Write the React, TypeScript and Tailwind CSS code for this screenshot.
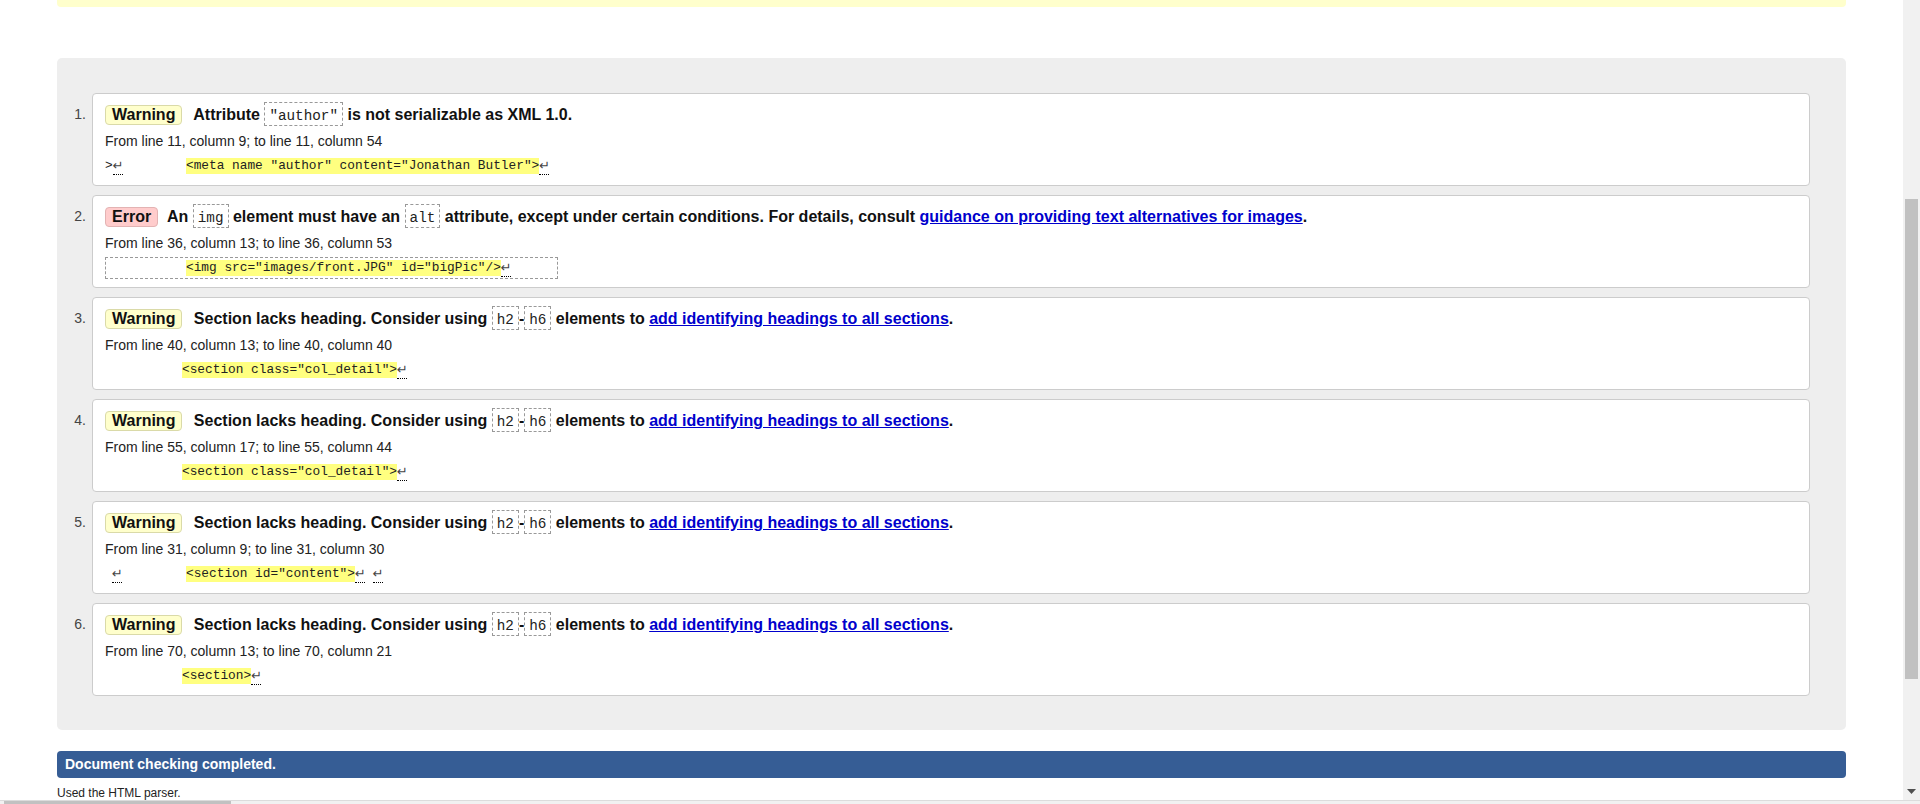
import type { ReactNode } from 'react';

const sans = "font-['Liberation_Sans',Arial,sans-serif]";
const mono = "font-['Liberation_Mono','DejaVu_Sans_Mono',monospace]";

function Lf() {
  return (
    <span className="inline-block align-top w-[10px] h-[17px] leading-[16px] text-center font-['DejaVu_Sans',sans-serif] text-[13px] text-[#444] border-b border-dotted border-[#000]">
      ↵
    </span>
  );
}

function Code({ children }: { children: ReactNode }) {
  return (
    <code className={`inline-block ${mono} font-normal text-[14.3px] leading-[16px] text-[#222] border border-dashed border-[#999] px-[4px] pt-[5px] pb-[1px]`}>
      {children}
    </code>
  );
}

function Badge({ kind }: { kind: 'Warning' | 'Error' }) {
  const tone =
    kind === 'Error'
      ? 'bg-[#ffcccc] border-[#e3b3b3] mr-[5px]'
      : 'bg-[#ffffcc] border-[#dadaa8] mr-[7px]';
  return (
    <span className={`inline-block leading-[18px] border rounded-[4px] px-[6px] ${tone}`}>{kind}</span>
  );
}

function Mark({ children }: { children: ReactNode }) {
  return <span className="inline-block leading-[16px] bg-[#ffff80]">{children}</span>;
}

type Msg = {
  kind: 'Warning' | 'Error';
  title: ReactNode;
  where: string;
  extract: ReactNode;
};

function LinkText({ children }: { children: ReactNode }) {
  return <a href="#" className="text-[#0000cc] underline">{children}</a>;
}

const sectionTitle = (
  <>
    Section lacks heading. Consider using <Code>h2</Code>-<Code>h6</Code> elements to{' '}
    <LinkText>add identifying headings to all sections</LinkText>.
  </>
);

const messages: Msg[] = [
  {
    kind: 'Warning',
    title: (
      <>
        Attribute <Code>"author"</Code> is not serializable as XML 1.0.
      </>
    ),
    where: 'From line 11, column 9; to line 11, column 54',
    extract: (
      <div className="h-[16px] mt-[8px] mb-[3px] whitespace-pre">
        <span className="inline-block w-[81px]">&gt;<Lf /></span>
        <Mark>{'<meta name "author" content="Jonathan Butler">'}</Mark>
        <Lf />
      </div>
    ),
  },
  {
    kind: 'Error',
    title: (
      <>
        An <Code>img</Code> element must have an <Code>alt</Code> attribute, except under certain
        conditions. For details, consult <LinkText>guidance on providing text alternatives for images</LinkText>.
      </>
    ),
    where: 'From line 36, column 13; to line 36, column 53',
    extract: (
      <div className="w-[453px] mt-[5px] border border-dashed border-[#999] py-[2px]">
        <div className="h-[16px] whitespace-pre">
          <span className="inline-block w-[80px]" />
          <Mark>{'<img src="images/front.JPG" id="bigPic"/>'}</Mark>
          <Lf />
        </div>
      </div>
    ),
  },
  {
    kind: 'Warning',
    title: sectionTitle,
    where: 'From line 40, column 13; to line 40, column 40',
    extract: (
      <div className="h-[16px] mt-[8px] mb-[3px] whitespace-pre">
        <span className="inline-block w-[77px]" />
        <Mark>{'<section class="col_detail">'}</Mark>
        <Lf />
      </div>
    ),
  },
  {
    kind: 'Warning',
    title: sectionTitle,
    where: 'From line 55, column 17; to line 55, column 44',
    extract: (
      <div className="h-[16px] mt-[8px] mb-[3px] whitespace-pre">
        <span className="inline-block w-[77px]" />
        <Mark>{'<section class="col_detail">'}</Mark>
        <Lf />
      </div>
    ),
  },
  {
    kind: 'Warning',
    title: sectionTitle,
    where: 'From line 31, column 9; to line 31, column 30',
    extract: (
      <div className="h-[16px] mt-[8px] mb-[3px] whitespace-pre">
        <span className="inline-block w-[81px] pl-[7px]"><Lf /></span>
        <Mark>{'<section id="content">'}</Mark>
        <Lf /> <Lf />
      </div>
    ),
  },
  {
    kind: 'Warning',
    title: sectionTitle,
    where: 'From line 70, column 13; to line 70, column 21',
    extract: (
      <div className="h-[16px] mt-[8px] mb-[3px] whitespace-pre">
        <span className="inline-block w-[77px]" />
        <Mark>{'<section>'}</Mark>
        <Lf />
      </div>
    ),
  },
];

export default function App() {
  return (
    <div className={`h-[804px] w-[1920px] overflow-hidden bg-white flex flex-col ${sans}`}>
      <div className="flex h-[800px]">
        {/* page content */}
        <div className="flex-1 px-[57px]">
          <div className="h-[7px] bg-[#ffffcc] rounded-b-[4px]" />

          <div className="mt-[51px] bg-[#eeeeee] rounded-[5px] pt-[35px] pb-[34px] pr-[36px]">
            <ol className="flex flex-col gap-[9px]">
              {messages.map((m, i) => (
                <li key={i} className="flex">
                  <div className="w-[35px] shrink-0 pt-[9px] pr-[6px] text-right text-[14px] leading-[25px] text-[#444]">
                    {i + 1}.
                  </div>
                  <div className="flex-1 bg-white border border-[#cccccc] rounded-[4px] pt-[8px] pb-[8px] px-[12px]">
                    <p className="text-[16px] leading-[25px] font-bold text-[#111]">
                      <Badge kind={m.kind} /> {m.title}
                    </p>
                    <p className="mt-[5px] text-[14px] leading-[18px] text-[#222]">{m.where}</p>
                    <div className={`${mono} text-[12.8px] leading-[16px] text-[#222]`}>{m.extract}</div>
                  </div>
                </li>
              ))}
            </ol>
          </div>

          <div className="mt-[21px] h-[27px] bg-[#365d95] rounded-[4px] px-[8px] text-[14px] leading-[27px] font-bold text-white">
            Document checking completed.
          </div>
          <p className="mt-[8px] text-[12px] leading-[14px] text-[#222]">Used the HTML parser.</p>
        </div>

        {/* vertical scrollbar */}
        <div className="w-[17px] shrink-0 bg-[#f1f1f1] flex flex-col">
          <div className="h-[199px]" />
          <div className="h-[480px] mx-[2px] bg-[#c1c1c1]" />
          <div className="flex-1" />
          <div className="h-[17px] flex items-center justify-center">
            <svg width="9" height="5" viewBox="0 0 9 5">
              <path d="M0 0h9L4.5 5z" fill="#505050" />
            </svg>
          </div>
        </div>
      </div>

      {/* horizontal scrollbar (cut off) */}
      <div className="h-[4px] bg-[#f1f1f1] border-t border-[#dcdcdc]">
        <div className="ml-[4px] w-[227px] h-[3px] bg-[#c1c1c1]" />
      </div>
    </div>
  );
}
